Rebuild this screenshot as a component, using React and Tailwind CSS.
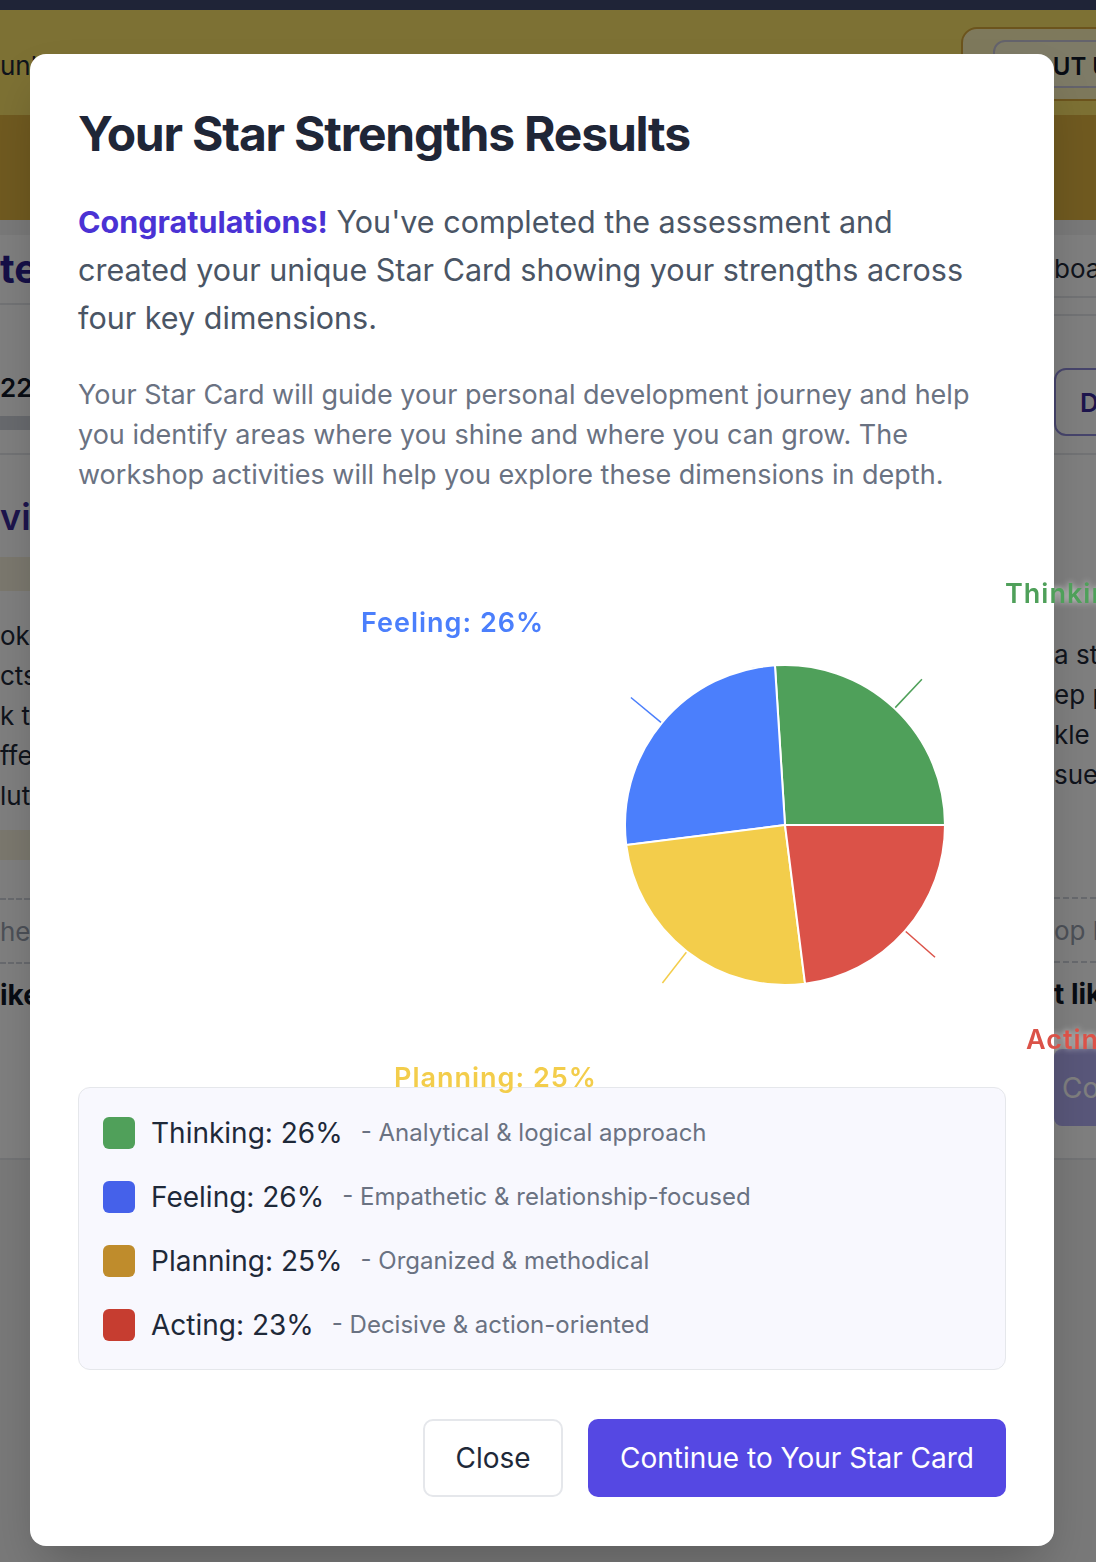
import React from "react";

const slices = [
  { name: "Thinking", value: 26, color: "#4fa05a", from: 0, to: 93.6 },
  { name: "Feeling", value: 26, color: "#4b7ffc", from: 93.6, to: 187.2 },
  { name: "Planning", value: 25, color: "#f3cd4b", from: 187.2, to: 277.2 },
  { name: "Acting", value: 23, color: "#db5248", from: 277.2, to: 360 },
];

// label spots as they land in the original chart (svg coords)
const labels = [
  { text: "Thinking: 26%", color: "#4fa05a", x: 927, y: 108 },
  { text: "Feeling: 26%", color: "#4b7ffc", x: 283, y: 137 },
  { text: "Planning: 25%", color: "#f3cd4b", x: 316, y: 592 },
  { text: "Acting: 23%", color: "#db5248", x: 948, y: 554 },
];

const legend = [
  { label: "Thinking: 26%", desc: "- Analytical & logical approach", color: "bg-[#50a05a]" },
  { label: "Feeling: 26%", desc: "- Empathetic & relationship-focused", color: "bg-[#4561ea]" },
  { label: "Planning: 25%", desc: "- Organized & methodical", color: "bg-[#bf8c2c]" },
  { label: "Acting: 23%", desc: "- Decisive & action-oriented", color: "bg-[#c63d30]" },
];

const cx = 707;
const cy = 330;
const r = 160;

const pt = (deg, rad) => {
  const a = (deg * Math.PI) / 180;
  return [cx + rad * Math.cos(a), cy - rad * Math.sin(a)];
};

function PieChart() {
  return (
    <svg width="926" height="592" className="block overflow-visible [filter:drop-shadow(0_0_3px_rgba(255,255,255,0.7))]">
      {slices.map((s) => {
        const [x1, y1] = pt(s.from, r);
        const [x2, y2] = pt(s.to, r);
        return (
          <path
            key={s.name}
            d={`M ${cx} ${cy} L ${x1} ${y1} A ${r} ${r} 0 0 0 ${x2} ${y2} Z`}
            fill={s.color}
            stroke="#fff"
            strokeWidth="2"
          />
        );
      })}
      {slices.map((s) => {
        const mid = (s.from + s.to) / 2;
        const [x1, y1] = pt(mid, r + 1);
        const [x2, y2] = pt(mid, r + 40);
        return <line key={s.name} x1={x1} y1={y1} x2={x2} y2={y2} stroke={s.color} strokeWidth="1.5" />;
      })}
      {labels.map((l) => (
        <text
          key={l.text}
          x={l.x}
          y={l.y}
          fill={l.color}
          fontSize="27"
          fontWeight="600"
          letterSpacing="1"
          fontFamily="Inter, sans-serif"
        >
          {l.text}
        </text>
      ))}
    </svg>
  );
}

function PageBehind() {
  return (
    <div className="flex flex-col">
      <div className="h-[10px] bg-[#3e486e]" />
      <div className="flex h-[105px] items-center justify-between bg-[#fae268]">
        <p className="mt-[6px] whitespace-nowrap text-[26px] text-gray-800">unlock your potential and build</p>
        <div className="mr-[-60px] mt-[2px] flex h-[74px] w-[195px] shrink-0 items-center rounded-2xl border-2 border-[#d9a93a] bg-[#fdf3b8] pl-[30px]">
          <div className="flex h-[48px] items-center whitespace-nowrap rounded-xl border-2 border-[#c9c6d8] bg-[#fdf6cf] pl-[6px] pr-2 pt-[6px] text-[24px] font-semibold text-gray-900">
            ABOUT US
          </div>
        </div>
      </div>
      <div className="h-[105px] bg-[#e0b440]" />

      <div className="mt-[15px] flex h-[925px] justify-between border-b-2 border-gray-200 bg-white">
        <div className="w-[30px] whitespace-nowrap">
          <div className="flex h-[70px] items-center border-b-2 border-gray-200 text-[40px] font-bold text-[#2b1f8f]">te</div>
          <div className="h-[150px] border-b-2 border-gray-200 pt-[68px]">
            <p className="text-[26px] font-semibold leading-[30px] text-gray-900">22</p>
            <div className="mt-[13px] h-[14px] bg-gray-300" />
          </div>
          <p className="mt-[42px] text-[36px] font-semibold leading-[40px] text-[#3b2a9a]">vi</p>
          <div className="mt-[20px] h-[34px] bg-[#f6f0dc]" />
          <div className="mt-[25px] text-[26px] leading-[40px] text-gray-800">
            <p>ok a</p>
            <p>cts</p>
            <p>k th</p>
            <p>ffe</p>
            <p>lut</p>
          </div>
          <div className="mt-[14px] h-[30px] bg-[#f6f0dc]" />
          <div className="mt-[38px] flex h-[66px] items-center border-y-2 border-dashed border-gray-300 text-[26px] text-gray-400">
            he
          </div>
          <p className="flex h-[62px] items-center text-[28px] font-bold text-gray-900">ike</p>
        </div>

        <div className="w-[42px] overflow-hidden whitespace-nowrap">
          <div className="h-[63px] border-b-2 border-gray-200 pt-[14px] text-[26px] text-gray-800">board</div>
          <div className="h-[18px] border-b-2 border-gray-200" />
          <div className="mt-[52px] flex h-[68px] w-[80px] items-center rounded-xl border-2 border-[#8f8bd9] pl-6 text-[26px] font-semibold text-[#3b2a9a]">
            D
          </div>
          <div className="mt-[17px] border-b-2 border-gray-200" />
          <div className="mt-[180px] text-[26px] leading-[40px] text-gray-800">
            <p>a st</p>
            <p>ep p</p>
            <p>kle</p>
            <p>sue</p>
          </div>
          <div className="mt-[102px] flex h-[66px] items-center border-y-2 border-dashed border-gray-300 text-[26px] text-gray-400">
            op h
          </div>
          <p className="flex h-[62px] items-center text-[28px] font-bold text-gray-900">t lik</p>
          <div className="mt-[24px] flex h-[77px] w-[120px] items-center rounded-lg bg-[#b3aef5] pl-2 text-[28px] text-white">
            Continue
          </div>
        </div>
      </div>
    </div>
  );
}

export default function App() {
  return (
    <div className="relative h-[1562px] w-[1096px] overflow-hidden bg-[#f2f2f2] font-['Inter',sans-serif]">
      <PageBehind />
      <div className="absolute inset-0 bg-black/50" />

      <div className="absolute left-[30px] top-[54px] w-[1024px] rounded-2xl bg-white px-12 pb-[49px] pt-[50px] shadow-2xl">
        <h2 className="text-[48px] font-bold leading-tight tracking-tight text-[#1f2637]">Your Star Strengths Results</h2>

        <p className="mt-[34px] text-[30.5px] leading-[48px] text-gray-600">
          <span className="font-bold text-[#4a32d4]">Congratulations!</span> You've completed the assessment and
          created your unique Star Card showing your strengths across four key dimensions.
        </p>

        <p className="mt-[33px] text-[27px] leading-[40px] text-gray-500">
          Your Star Card will guide your personal development journey and help you identify areas where you shine and
          where you can grow. The workshop activities will help you explore these dimensions in depth.
        </p>

        <div className="relative z-10">
          <PieChart />
        </div>

        <div className="flex flex-col gap-8 rounded-xl border border-gray-200 bg-[#f8f8fe] px-6 pb-7 pt-[29px]">
          {legend.map((item) => (
            <div key={item.label} className="flex h-8 items-center">
              <span className={`h-8 w-8 shrink-0 rounded-md ${item.color}`} />
              <span className="ml-4 text-[28px] text-gray-800">{item.label}</span>
              <span className="ml-[18px] text-[24px] text-gray-500">{item.desc}</span>
            </div>
          ))}
        </div>

        <div className="mt-[49px] flex justify-end gap-[25px]">
          <button className="h-[78px] w-[140px] rounded-[10px] border-2 border-gray-200 bg-white text-[28px] text-gray-800">
            Close
          </button>
          <button className="h-[78px] rounded-[10px] bg-[#5548e3] px-8 text-[28px] text-white">
            Continue to Your Star Card
          </button>
        </div>
      </div>
    </div>
  );
}
